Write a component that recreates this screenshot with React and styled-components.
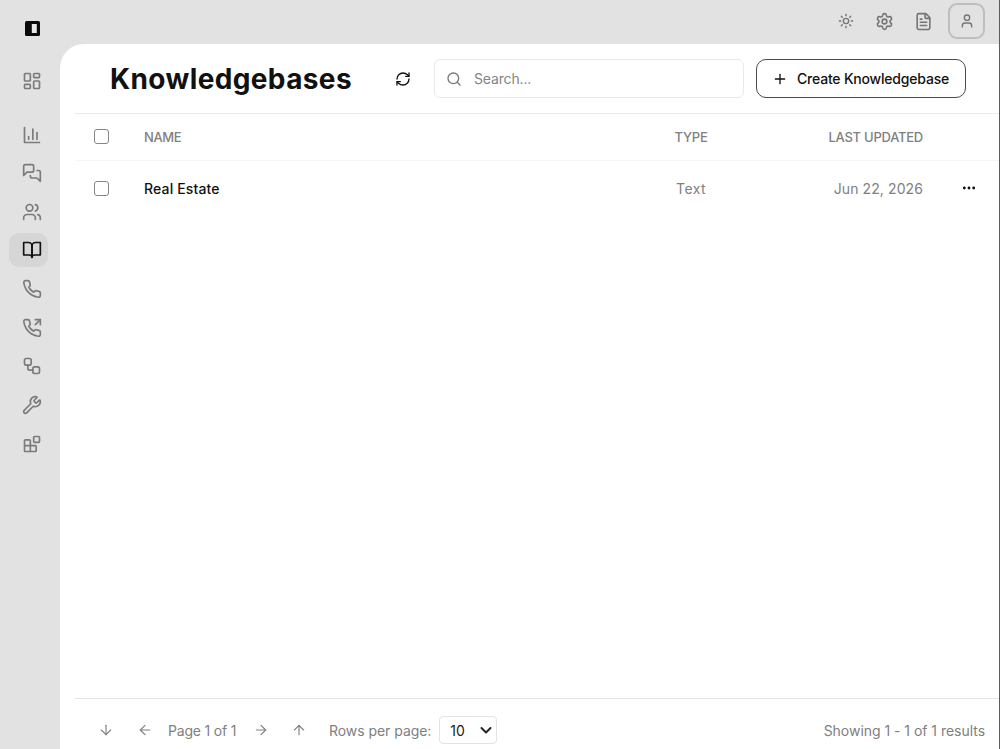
import styled, { createGlobalStyle } from "styled-components";
import {
  ArrowDown,
  ArrowLeft,
  ArrowRight,
  ArrowUp,
  Ellipsis,
  FileText,
  LayoutDashboard,
  Plus,
  RefreshCw,
  Search,
  Settings,
  Sun,
  User,
  Users,
  Wrench,
} from "lucide-react";

const GlobalStyle = createGlobalStyle`
  * {
    box-sizing: border-box;
  }
  body {
    margin: 0;
    background: #e2e2e2;
    font-family: "Inter", "Liberation Sans", sans-serif;
    font-size: 14px;
    color: #111;
  }
  button, input {
    font: inherit;
    color: inherit;
  }
  svg {
    display: block;
    flex: none;
  }
`;

const Shell = styled.div`
  display: flex;
  height: 749px;
  border-right: 1px solid #5c5c5c;
  overflow: hidden;
`;

const Sidebar = styled.nav`
  width: 60px;
  padding: 20px 0 0 9px;
  flex: none;
`;

const NavItem = styled.div`
  display: flex;
  align-items: center;
  justify-content: center;
  width: 39px;
  height: 34px;
  padding-left: 7px;
  margin-bottom: ${({ $gap }) => $gap || "4.65px"};
  border-radius: 10px;
  color: ${({ $active }) => ($active ? "#111" : "#7b7b7b")};
  background: ${({ $active }) => ($active ? "#d6d6d6" : "transparent")};
`;

const Toggle = styled(NavItem)`
  height: 17px;
  padding-left: 8px;
  margin-bottom: 26.5px;
  color: #0a0a0a;
`;

const Column = styled.div`
  flex: 1;
  display: flex;
  flex-direction: column;
  min-width: 0;
`;

const TopBar = styled.header`
  display: flex;
  align-items: center;
  justify-content: flex-end;
  height: 44px;
  padding: 0 14px 2px 0;
  color: #757575;
`;

const TopIcon = styled.div`
  display: flex;
  justify-content: center;
  width: 38.5px;
`;

const Avatar = styled.div`
  display: flex;
  align-items: center;
  justify-content: center;
  width: 37px;
  height: 36px;
  margin-left: 5.5px;
  border: 2px solid #bebebe;
  border-radius: 9px;
`;

const Panel = styled.main`
  flex: 1;
  display: flex;
  flex-direction: column;
  padding-left: 15px;
  background: #fff;
  border-top-left-radius: 24px;
`;

const Heading = styled.div`
  display: flex;
  align-items: center;
  height: 70px;
  padding: 0 33px 0 35px;
  border-bottom: 1px solid #ebebeb;
`;

const Title = styled.h1`
  width: 285px;
  margin: 0;
  font-size: 28px;
  line-height: 36px;
  font-weight: 700;
  letter-spacing: 0.38px;
  white-space: nowrap;
`;

const SearchBox = styled.label`
  display: flex;
  align-items: center;
  width: 310px;
  height: 39px;
  margin: 0 12px 0 23px;
  padding-left: 11px;
  gap: 12px;
  border: 1px solid #e9e9e9;
  border-radius: 6px;
  color: #777;
`;

const SearchInput = styled.input`
  width: 220px;
  padding: 0;
  border: 0;
  outline: 0;
  background: transparent;
  letter-spacing: -0.15px;
  &::placeholder {
    color: #858585;
    opacity: 1;
  }
`;

const CreateButton = styled.button`
  display: flex;
  align-items: center;
  width: 210px;
  height: 39px;
  padding: 0 0 0 15px;
  gap: 9px;
  border: 1px solid #4a4a4a;
  border-radius: 10px;
  background: #fff;
  font-weight: 500;
  white-space: nowrap;
`;

const Row = styled.div`
  display: grid;
  grid-template-columns: 69px 497px 100px 182px 1fr;
  align-items: center;
  height: ${({ $head }) => ($head ? "47px" : "55px")};
  padding-bottom: ${({ $head }) => ($head ? "1px" : "0")};
  border-bottom: 1px solid ${({ $head }) => ($head ? "#f6f6f6" : "transparent")};
  color: #808080;
  font-weight: ${({ $head }) => ($head ? 500 : 400)};
`;

const Checkbox = styled.input.attrs({ type: "checkbox" })`
  appearance: none;
  width: 15px;
  height: 15px;
  margin: 0 0 0 19px;
  border: 1px solid #858585;
  border-radius: 3px;
`;

const Cell = styled.div`
  text-align: ${({ $align }) => $align || "left"};
  color: ${({ $strong }) => ($strong ? "#111" : "inherit")};
  font-weight: ${({ $strong }) => ($strong ? 500 : "inherit")};
  white-space: nowrap;
`;

const More = styled.div`
  padding-left: 38px;
  color: #111;
`;

const Text = styled.span`
  display: inline-block;
  font-size: ${({ $size }) => $size || "14px"};
  letter-spacing: ${({ $track }) => $track || "0"};
  white-space: nowrap;
`;

const Footer = styled.footer`
  display: flex;
  align-items: center;
  height: 51px;
  margin-top: auto;
  padding: 12px 14px 0 16px;
  border-top: 1px solid #e4e4e4;
  color: #808080;
`;

const Pager = styled.div`
  display: flex;
  align-items: center;
  gap: 8.5px;
  margin-right: 15px;
`;

const PageButton = styled.button`
  display: flex;
  align-items: center;
  justify-content: center;
  width: 30px;
  height: 28px;
  padding: 0;
  border: 0;
  background: transparent;
`;

const PageLabel = styled.div`
  width: 69px;
`;

const Select = styled.div`
  display: flex;
  align-items: center;
  justify-content: space-between;
  width: 58px;
  height: 28px;
  margin-left: 8px;
  padding: 0 4px 0 10px;
  border: 1px solid #e3e3e3;
  border-radius: 4px;
  color: #222;
`;

const Results = styled.div`
  margin-left: auto;
`;

const Glyph = ({ children, size = 20, width = 2 }) => (
  <svg
    width={size}
    height={size}
    viewBox="0 0 24 24"
    fill="none"
    stroke="currentColor"
    strokeWidth={width}
    strokeLinecap="round"
    strokeLinejoin="round"
  >
    {children}
  </svg>
);

const handset =
  "M22 16.92v3a2 2 0 0 1-2.18 2 19.79 19.79 0 0 1-8.63-3.07 19.5 19.5 0 0 1-6-6 19.79 19.79 0 0 1-3.07-8.67A2 2 0 0 1 4.11 2h3a2 2 0 0 1 2 1.72 12.84 12.84 0 0 0 .7 2.81 2 2 0 0 1-.45 2.11L8.09 9.91a16 16 0 0 0 6 6l1.27-1.27a2 2 0 0 1 2.11-.45 12.84 12.84 0 0 0 2.81.7A2 2 0 0 1 22 16.92z";

const App = () => {
  return (
    <>
      <GlobalStyle />
      <Shell>
        <Sidebar>
          <Toggle>
            <svg width="15" height="15" viewBox="0 0 15 15">
              <rect width="15" height="15" rx="1.5" fill="currentColor" />
              <rect x="6.8" y="3" width="5" height="9" fill="#e8e8e8" />
            </svg>
          </Toggle>
          <NavItem $gap="20px">
            <LayoutDashboard size={20} />
          </NavItem>
          <NavItem>
            <Glyph>
              <path d="M3 3v18h18" />
              <path d="M18 17V9" />
              <path d="M13 17V5" />
              <path d="M8 17v-3" />
            </Glyph>
          </NavItem>
          <NavItem>
            <Glyph>
              <path d="M14 9a2 2 0 0 1-2 2H6l-4 4V4c0-1.1.9-2 2-2h8a2 2 0 0 1 2 2v5Z" />
              <path d="M18 9h2a2 2 0 0 1 2 2v11l-4-4h-6a2 2 0 0 1-2-2v-1" />
            </Glyph>
          </NavItem>
          <NavItem>
            <Users size={20} />
          </NavItem>
          <NavItem $active>
            <Glyph>
              <path d="M2 3h6a4 4 0 0 1 4 4v14a3 3 0 0 0-3-3H2z" />
              <path d="M22 3h-6a4 4 0 0 0-4 4v14a3 3 0 0 1 3-3h7z" />
            </Glyph>
          </NavItem>
          <NavItem>
            <Glyph>
              <path d={handset} />
            </Glyph>
          </NavItem>
          <NavItem>
            <Glyph>
              <path d="M22 8V2h-6" />
              <path d="m16 8 6-6" />
              <path d={handset} />
            </Glyph>
          </NavItem>
          <NavItem>
            <Glyph>
              <rect x="3" y="3" width="8" height="8" rx="2" />
              <path d="M7 11v4a2 2 0 0 0 2 2h4" />
              <rect x="13" y="13" width="8" height="8" rx="2" />
            </Glyph>
          </NavItem>
          <NavItem>
            <Wrench size={20} />
          </NavItem>
          <NavItem>
            <Glyph>
              <rect x="14" y="3" width="7" height="7" rx="1" />
              <path d="M10 21V8a1 1 0 0 0-1-1H4a1 1 0 0 0-1 1v12a1 1 0 0 0 1 1h12a1 1 0 0 0 1-1v-5a1 1 0 0 0-1-1H3" />
            </Glyph>
          </NavItem>
        </Sidebar>
        <Column>
          <TopBar>
            <TopIcon><Sun size={16} /></TopIcon>
            <TopIcon><Settings size={19} /></TopIcon>
            <TopIcon><FileText size={19} /></TopIcon>
            <Avatar><User size={16} /></Avatar>
          </TopBar>
          <Panel>
            <Heading>
              <Title>Knowledgebases</Title>
              <RefreshCw size={16} />
              <SearchBox>
                <Search size={16} />
                <SearchInput placeholder="Search..." />
              </SearchBox>
              <CreateButton>
                <Plus size={16} />
                <Text $track="-0.2px">Create Knowledgebase</Text>
              </CreateButton>
            </Heading>
            <Row $head>
              <Checkbox />
              <Cell><Text $size="13px" $track="-0.35px">NAME</Text></Cell>
              <Cell $align="center"><Text $size="13px" $track="-0.2px">TYPE</Text></Cell>
              <Cell $align="right"><Text $size="13px" $track="-0.25px">LAST UPDATED</Text></Cell>
            </Row>
            <Row>
              <Checkbox />
              <Cell $strong><Text $track="0.15px">Real Estate</Text></Cell>
              <Cell $align="center"><Text $track="0.4px">Text</Text></Cell>
              <Cell $align="right"><Text $track="0.1px">Jun 22, 2026</Text></Cell>
              <More><Ellipsis size={16} strokeWidth={2.25} /></More>
            </Row>
            <Footer>
              <Pager>
                <PageButton><ArrowDown size={16} strokeWidth={1.75} /></PageButton>
                <PageButton><ArrowLeft size={16} strokeWidth={1.75} /></PageButton>
                <PageLabel><Text $track="-0.2px">Page 1 of 1</Text></PageLabel>
                <PageButton><ArrowRight size={16} strokeWidth={1.75} /></PageButton>
                <PageButton><ArrowUp size={16} strokeWidth={1.75} /></PageButton>
              </Pager>
              <Text $track="-0.05px">Rows per page:</Text>
              <Select>
                <Text>10</Text>
                <Glyph size={12} width={4}>
                  <path d="m3 8 9 9 9-9" />
                </Glyph>
              </Select>
              <Results><Text $track="-0.03px">Showing 1 - 1 of 1 results</Text></Results>
            </Footer>
          </Panel>
        </Column>
      </Shell>
    </>
  );
};

export default App;
